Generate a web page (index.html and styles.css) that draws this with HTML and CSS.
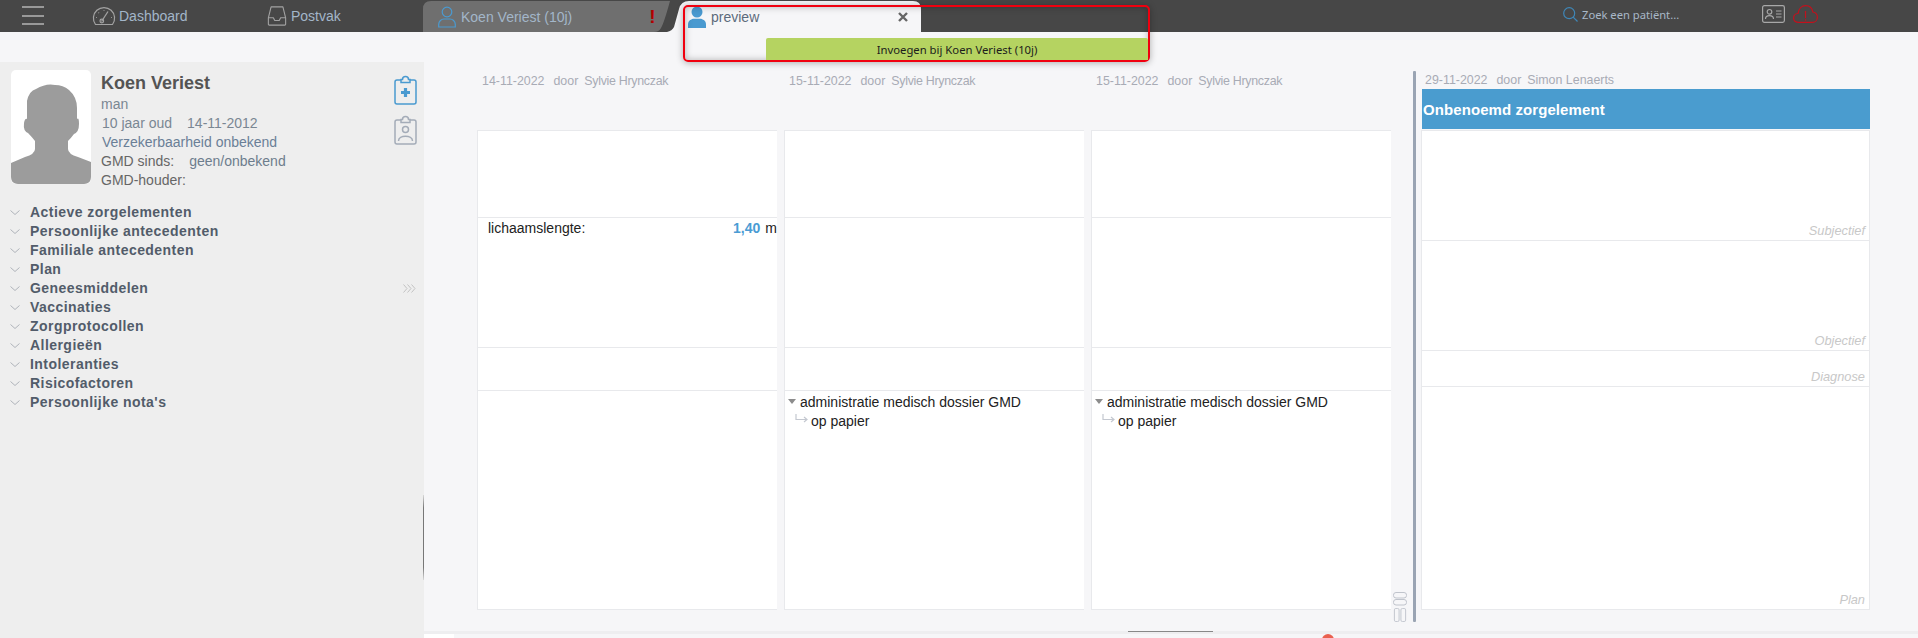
FILE: index.html
```html
<!DOCTYPE html>
<html lang="nl">
<head>
<meta charset="utf-8">
<title>Koen Veriest</title>
<link rel="stylesheet" href="styles.css">
</head>
<body>
<header class="topbar">
  <div class="burger"><span></span><span></span><span></span></div>
  <div class="nav nav-dash">
    <svg class="ic-dash" viewBox="0 0 24 20" fill="none" stroke="#a3a3a3" stroke-width="1.2"><path d="M3.5 18.5A10.6 10.6 0 1 1 20.5 18.5Z" stroke-linejoin="round"/><path d="M9.5 15.5L16 5.5" stroke-width="1.3"/><circle cx="9.8" cy="15" r="1.8"/><path d="M4 11.5h.8M12 4.2v.8M6.5 6.5l.5.5M19.2 11.5h.8" stroke-width="1.1"/></svg>
    <span>Dashboard</span>
  </div>
  <div class="nav nav-post">
    <svg class="ic-post" viewBox="0 0 20 22" fill="none" stroke="#a3a3a3" stroke-width="1.2"><path d="M3.5 1h13L19.5 13v7a1 1 0 0 1-1 1h-17a1 1 0 0 1-1-1v-7Z" stroke-linejoin="round"/><path d="M.5 13h5.5l1.5 3h5l1.5-3h5.5" stroke-linejoin="round"/></svg>
    <span>Postvak</span>
  </div>
  <div class="tab tab-patient">
    <svg class="ic-person" viewBox="0 0 18 22" fill="none" stroke="#4a9ad0" stroke-width="1.2"><circle cx="9" cy="6" r="4.8"/><path d="M.7 21v-2.5C.7 15 3.5 13 6 13h6c2.5 0 5.3 2 5.3 5.5V21Z"/></svg>
    <span class="tab-label">Koen Veriest (10j)</span>
    <span class="tab-alert">!</span>
  </div>
  <div class="tab tab-preview">
    <svg class="ic-person" viewBox="0 0 18 22" fill="#4a9ad0"><circle cx="9" cy="6" r="5.5"/><path d="M0 22v-3.5C0 15 3 12.8 6 12.8h6c3 0 6 2.2 6 5.7V22Z"/></svg>
    <span class="preview-label">preview</span>
    <svg class="ic-close" viewBox="0 0 10 10" stroke="#666" stroke-width="2.4"><path d="M1 1l8 8M9 1l-8 8"/></svg>
  </div>
  <div class="tools">
    <svg class="ic-search" viewBox="0 0 15 15" fill="none" stroke="#3f87b8" stroke-width="1.2"><circle cx="6.2" cy="6.2" r="5.5"/><path d="M10.2 10.2l4.3 4.3"/></svg>
    <span class="search-text">Zoek een patiënt...</span>
    <svg class="ic-card" viewBox="0 0 23 18" fill="none" stroke="#a8a8a8" stroke-width="1.2"><rect x=".6" y=".6" width="21.8" height="16.8" rx="1.8"/><circle cx="7.5" cy="6.8" r="2.3"/><path d="M3.5 14c0-4.5 8-4.5 8 0M14 6h5.5M14 9h5.5M14 12h5.5"/></svg>
    <svg class="ic-cloud" viewBox="0 0 25 18" fill="none" stroke="#c4101c" stroke-width="1.2"><path d="M6 17.4C2.8 17.4.6 15.6.6 13C.6 10.4 2.6 8.6 5 8.5C5.6 4 8.6.6 12.7.6C16.5.6 19.2 3.4 19.8 7C22.4 7.3 24.4 9.6 24.4 12.3C24.4 15.2 22.2 17.4 19.4 17.4Z"/><path d="M12.5 6v7M12.5 14.3v1.5"/></svg>
  </div>
</header>

<div class="highlight">
  <div class="insert-btn">Invoegen bij Koen Veriest (10j)</div>
</div>

<div class="page">
  <aside class="sidebar">
    <section class="patient">
      <div class="photo">
        <svg viewBox="0 0 80 114" fill="#9c9c9c"><path d="M0 93L14 87Q24 84 24 79V71Q20 66 17 63Q12 61 13 53Q14 48 16 49L16 31Q18 21 25 19Q35 13 44 15Q52 15 58 20Q66 27 66 38V49Q68 47 68 54Q68 62 63 64Q60 68 57 71V79Q57 84 67 87L80 92V107Q80 114 73 114H7Q0 114 0 107Z"/></svg>
      </div>
      <div class="info">
        <h1 class="name">Koen Veriest</h1>
        <div class="line muted">man</div>
        <div class="line muted age"><span>10 jaar oud</span><span>14-11-2012</span></div>
        <div class="line blueish">Verzekerbaarheid onbekend</div>
        <div class="line gmd"><span>GMD sinds:</span><span class="gmd-val">geen/onbekend</span></div>
        <div class="line">GMD-houder:</div>
      </div>
      <div class="side-icons">
        <svg viewBox="0 0 23 30" fill="none" stroke="#4a9ad0" stroke-width="1.5"><path d="M7 5H3Q1 5 1 7V27Q1 29 3 29H20Q22 29 22 27V7Q22 5 20 5H16"/><path d="M7 7.5V4.5H8.5A3 3 0 0 1 14.5 4.5H16V7.5Z"/><path d="M11.5 13v9M7 17.5h9" stroke-width="3.2"/></svg>
        <svg viewBox="0 0 23 30" fill="none" stroke="#a4acb8" stroke-width="1.5"><path d="M7 5H3Q1 5 1 7V27Q1 29 3 29H20Q22 29 22 27V7Q22 5 20 5H16"/><path d="M7 7.5V4.5H8.5A3 3 0 0 1 14.5 4.5H16V7.5Z"/><circle cx="11.5" cy="14.5" r="3"/><path d="M4.5 26c0-6.5 14-6.5 14 0"/></svg>
      </div>
    </section>
    <ul class="tree">
      <li><svg viewBox="0 0 10 5"><path d="M.5.5L5 4.5 9.5.5"/></svg>Actieve zorgelementen</li>
      <li><svg viewBox="0 0 10 5"><path d="M.5.5L5 4.5 9.5.5"/></svg>Persoonlijke antecedenten</li>
      <li><svg viewBox="0 0 10 5"><path d="M.5.5L5 4.5 9.5.5"/></svg>Familiale antecedenten</li>
      <li><svg viewBox="0 0 10 5"><path d="M.5.5L5 4.5 9.5.5"/></svg>Plan</li>
      <li><svg viewBox="0 0 10 5"><path d="M.5.5L5 4.5 9.5.5"/></svg>Geneesmiddelen<svg class="more" viewBox="0 0 13 9"><path d="M.5.5L4 4.5.5 8.5M4.5.5L8 4.5 4.5 8.5M8.5.5L12 4.5 8.5 8.5"/></svg></li>
      <li><svg viewBox="0 0 10 5"><path d="M.5.5L5 4.5 9.5.5"/></svg>Vaccinaties</li>
      <li><svg viewBox="0 0 10 5"><path d="M.5.5L5 4.5 9.5.5"/></svg>Zorgprotocollen</li>
      <li><svg viewBox="0 0 10 5"><path d="M.5.5L5 4.5 9.5.5"/></svg>Allergieën</li>
      <li><svg viewBox="0 0 10 5"><path d="M.5.5L5 4.5 9.5.5"/></svg>Intoleranties</li>
      <li><svg viewBox="0 0 10 5"><path d="M.5.5L5 4.5 9.5.5"/></svg>Risicofactoren</li>
      <li><svg viewBox="0 0 10 5"><path d="M.5.5L5 4.5 9.5.5"/></svg>Persoonlijke nota's</li>
    </ul>
  </aside>

  <main class="main">
    <div class="records">
      <article class="record">
        <div class="meta"><span>14-11-2022</span><span>door</span><span class="author">Sylvie Hrynczak</span></div>
        <div class="card">
          <div class="cell s"></div>
          <div class="cell o"><div class="measure"><span>lichaamslengte:</span><b>1,40</b><span class="unit">m</span></div></div>
          <div class="cell d"></div>
          <div class="cell p"></div>
        </div>
      </article>
      <article class="record">
        <div class="meta"><span>15-11-2022</span><span>door</span><span class="author">Sylvie Hrynczak</span></div>
        <div class="card">
          <div class="cell s"></div>
          <div class="cell o"></div>
          <div class="cell d"></div>
          <div class="cell p">
            <div class="item"><i class="tri"></i>administratie medisch dossier GMD</div>
            <div class="sub"><svg viewBox="0 0 13 9" fill="none" stroke="#c4c8d0" stroke-width="1.2"><path d="M1 0V5.5H12M9 3l3 2.5L9 8"/></svg>op papier</div>
          </div>
        </div>
      </article>
      <article class="record">
        <div class="meta"><span>15-11-2022</span><span>door</span><span class="author">Sylvie Hrynczak</span></div>
        <div class="card">
          <div class="cell s"></div>
          <div class="cell o"></div>
          <div class="cell d"></div>
          <div class="cell p">
            <div class="item"><i class="tri"></i>administratie medisch dossier GMD</div>
            <div class="sub"><svg viewBox="0 0 13 9" fill="none" stroke="#c4c8d0" stroke-width="1.2"><path d="M1 0V5.5H12M9 3l3 2.5L9 8"/></svg>op papier</div>
          </div>
        </div>
      </article>
      <div class="layout-btns">
        <svg viewBox="0 0 14 14" fill="none" stroke="#c0c4cc"><rect x=".5" y=".5" width="13" height="5.5" rx="2.5"/><rect x=".5" y="7.5" width="13" height="5.5" rx="2.5"/></svg>
        <svg viewBox="0 0 14 15" fill="none" stroke="#c0c4cc"><rect x="1" y=".5" width="5" height="14" rx="1.5"/><rect x="8" y=".5" width="5" height="14" rx="1.5"/></svg>
      </div>
      <div class="divider"></div>
      <article class="current">
        <div class="meta"><span>29-11-2022</span><span>door</span><span>Simon Lenaerts</span></div>
        <div class="current-title">Onbenoemd zorgelement</div>
        <div class="soap">
          <div class="soap-s">Subjectief</div>
          <div class="soap-o">Objectief</div>
          <div class="soap-d">Diagnose</div>
          <div class="soap-p">Plan</div>
        </div>
      </article>
    </div>
    <div class="bottom">
      <div class="bottom-line"><span class="grip"></span></div>
      <div class="bottom-tabs"><span class="bottom-white"></span><span class="bottom-dot"></span></div>
    </div>
  </main>
</div>
</body>
</html>
```
FILE: styles.css
```css
* { box-sizing: border-box; }
html, body { margin: 0; height: 100%; }
body {
  width: 1918px;
  height: 638px;
  overflow: hidden;
  background: #f6f6f8;
  font-family: "Liberation Sans", Arial, sans-serif;
  font-size: 14px;
  position: relative;
  display: flex;
  flex-direction: column;
}

/* top bar */
.topbar {
  height: 32px;
  flex: none;
  background: #474747;
  display: flex;
  align-items: stretch;
  color: #a3b6c9;
}
.burger {
  width: 92px;
  padding: 6px 0 0 22px;
  display: flex;
  flex-direction: column;
  gap: 6.5px;
}
.burger span { display: block; width: 22px; height: 2px; background: #999; }
.nav { display: flex; align-items: center; gap: 3px; }
.nav-dash { width: 175px; }
.nav-post { width: 156px; gap: 4px; }
.ic-dash { width: 24px; height: 20px; }
.ic-post { width: 20px; height: 20px; }
.tab { height: 31px; margin-top: 1px; display: flex; align-items: center; }
.tab-patient {
  width: 247px;
  padding-left: 15px;
  background: #6f6f6f;
  clip-path: path("M0 31V8Q0 0 8 0H247Q241 22 238 27Q236 31 231 31Z");
}
.ic-person { width: 18px; height: 22px; flex: none; }
.tab-label { margin-left: 5px; }
.tab-alert { margin-left: 77px; color: #b30000; font-size: 19px; font-weight: bold; }
.tab-preview {
  width: 254px;
  margin-left: -3px;
  padding-left: 21px;
  background: #f6f6f8;
  clip-path: path("M0 31Q5 30 7 26L12 8Q14 0 22 0H246Q254 0 254 8V31Z");
}
.preview-label { margin-left: 5px; color: #5d6b7c; }
.ic-close { width: 10px; height: 10px; margin-left: 139px; }
.tools { display: flex; align-items: center; margin-left: 642px; }
.ic-search { width: 15px; height: 15px; margin-bottom: 3px; }
.search-text {
  margin-left: 4px;
  width: 180px;
  font-family: "Noto Sans", sans-serif;
  font-size: 11.2px;
  margin-bottom: 3px;
  color: #a9b8c7;
}
.ic-card { width: 23px; height: 18px; margin-bottom: 4px; }
.ic-cloud { width: 25px; height: 18px; margin-left: 8px; margin-bottom: 4px; }

/* red highlight over the tabs */
.highlight {
  position: absolute;
  left: 683px;
  top: 5px;
  width: 467px;
  height: 57px;
  border: 2px solid #f0000f;
  border-radius: 5px;
  box-shadow: 0 1px 7px rgba(0,0,0,.3), inset 0 0 7px rgba(0,0,0,.28);
}
.insert-btn {
  position: absolute;
  right: 0;
  bottom: 0;
  width: 382px;
  height: 22px;
  background: #b5d361;
  border-radius: 2px 2px 0 0;
  color: #1c1c1c;
  font-family: "Noto Sans", sans-serif;
  font-size: 11.3px;
  line-height: 24px;
  text-align: center;
}

/* page */
.page { flex: 1; display: flex; min-height: 0; }
.sidebar {
  width: 424px;
  flex: none;
  margin-top: 30px;
  background: #eeeeee;
  padding: 8px 0 0 11px;
  position: relative;
}
.sidebar::after {
  content: "";
  position: absolute;
  right: 0;
  top: 433px;
  width: 1px;
  height: 85px;
  background: linear-gradient(#d8d8d8, #777 15%, #777 85%, #d8d8d8);
}
.patient { display: flex; }
.photo {
  width: 80px;
  height: 114px;
  background: #fff;
  border-radius: 5px;
  overflow: hidden;
  flex: none;
}
.photo svg { display: block; width: 80px; height: 114px; }
.info { width: 293px; margin-left: 10px; color: #666; }
.name {
  margin: 3px 0 0;
  font-size: 18px;
  line-height: 21px;
  font-weight: bold;
  color: #545454;
}
.line { line-height: 19px; height: 19px; }
.name + .line { margin-top: 1px; }
.muted { color: #7a8793; }
.age { padding-left: 1px; display: flex; gap: 15px; }
.blueish { padding-left: 1px; color: #6a7f97; }
.gmd { display: flex; gap: 15px; }
.gmd-val { color: #6d7d8d; }
.side-icons { display: flex; flex-direction: column; gap: 10px; margin-top: 5px; }
.side-icons svg { display: block; width: 23px; height: 30px; }
.tree {
  list-style: none;
  margin: 13px 0 0 -1px;
  padding: 0;
  font-weight: bold;
  letter-spacing: .45px;
  color: #525c6a;
}
.tree li { height: 19px; line-height: 19px; display: flex; align-items: center; }
.tree svg { width: 10px; height: 5px; margin-right: 10px; fill: none; stroke: #b0b4bb; stroke-width: 1; }
.tree .more { width: 13px; height: 9px; margin-left: auto; margin-right: 8px; stroke: #c2c2c2; }

.main { flex: 1; display: flex; flex-direction: column; min-width: 0; }
.records { flex: 1; display: flex; padding: 39px 0 0 53px; min-height: 0; }
.record { width: 300px; flex: none; margin-right: 7px; }
.record:nth-child(3) { margin-right: 0; }
.meta {
  height: 19px;
  padding-left: 5px;
  display: flex;
  align-items: center;
  gap: 9px;
  font-size: 12.4px;
  color: #a8abb5;
  white-space: nowrap;
}
.meta span:last-child { margin-left: -3px; }
.meta .author { letter-spacing: -.28px; }
.card {
  margin-top: 40px;
  height: 480px;
  background: #fff;
  border: 1px solid #e8e9ec;
  border-right: 0;
  color: #222;
  display: flex;
  flex-direction: column;
}
.cell { border-bottom: 1px solid #e8e9ec; }
.cell.s { height: 87px; flex: none; }
.cell.o { height: 130px; flex: none; }
.cell.d { height: 43px; flex: none; }
.cell.p { flex: 1; border-bottom: 0; padding: 1px 0 0 3px; }
.measure { display: flex; padding: 2px 0 0 10px; line-height: 17px; }
.measure b { margin-left: auto; color: #4a9cd4; }
.unit { margin-left: 5px; }
.item { display: flex; align-items: center; height: 19px; }
.tri {
  width: 0;
  height: 0;
  border: 4.5px solid transparent;
  border-top: 5px solid #8c8c8c;
  border-bottom: 0;
  margin-right: 4px;
}
.sub { display: flex; align-items: center; height: 19px; padding-left: 7px; }
.sub svg { width: 13px; height: 9px; margin-right: 3px; margin-top: -4px; }
.layout-btns {
  width: 22px;
  padding: 521px 0 0 2px;
  display: flex;
  flex-direction: column;
  gap: 2px;
  flex: none;
}
.layout-btns svg { display: block; width: 14px; height: 14px; }
.divider {
  width: 3px;
  height: 551px;
  background: #9aa4b3;
  flex: none;
  border-radius: 1px;
}
.current { width: 449px; margin-left: 5px; flex: none; }
.current .meta { padding-left: 4px; height: 18px; }
.current-title {
  margin-left: 1px;
  height: 40px;
  width: 448px;
  padding-left: 1px;
  background: #4a9ccf;
  color: #fff;
  font-size: 15px;
  font-weight: bold;
  letter-spacing: .08px;
  line-height: 42px;
}
.soap {
  margin-top: 1px;
  height: 480px;
  background: #fff;
  border: 1px solid #e8e9ec;
  display: flex;
  flex-direction: column;
  font-size: 12.8px;
  font-style: italic;
  color: #c8c8c8;
}
.soap div {
  display: flex;
  align-items: flex-end;
  justify-content: flex-end;
  padding: 0 4px 2px 0;
  border-bottom: 1px solid #e8e9ec;
  flex: none;
}
.soap-s { height: 110px; }
.soap-o { height: 110px; }
.soap-d { height: 36px; }
.soap .soap-p { flex: 1; border-bottom: 0; }

.bottom { flex: none; height: 7px; }
.bottom-line { height: 3px; background: #eeeef0; padding-left: 704px; }
.grip { display: block; width: 85px; height: 1px; background: #888; }
.bottom-tabs { height: 4px; display: flex; overflow: hidden; }
.bottom-white { width: 30px; height: 4px; background: #fff; }
.bottom-dot {
  width: 12px;
  height: 12px;
  margin-left: 868px;
  border-radius: 50%;
  background: #e9604f;
}
```
